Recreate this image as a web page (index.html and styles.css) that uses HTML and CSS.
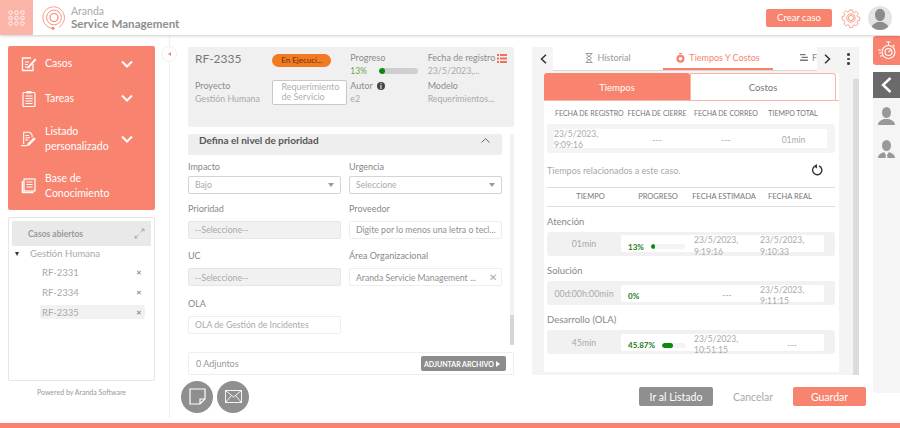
FILE: index.html
```html
<!DOCTYPE html>
<html lang="es">
<head>
    <meta charset="UTF-8">
    <meta name="viewport" content="width=device-width, initial-scale=1.0">
    <title>Aranda Service Management</title>
    <link rel="stylesheet" href="styles.css">
</head>
<body>
    <header class="topbar">
        <div class="appsButton">
            <svg width="17" height="16" viewBox="0 0 17 16" fill="none" stroke="#fff" stroke-width="0.8">
                <circle cx="2.5" cy="2.5" r="1.8"/><circle cx="8.5" cy="2.5" r="1.8"/><circle cx="14.5" cy="2.5" r="1.8"/>
                <circle cx="2.5" cy="8" r="1.8"/><circle cx="8.5" cy="8" r="1.8"/><circle cx="14.5" cy="8" r="1.8"/>
                <circle cx="2.5" cy="13.5" r="1.8"/><circle cx="8.5" cy="13.5" r="1.8"/><circle cx="14.5" cy="13.5" r="1.8"/>
            </svg>
        </div>
        <svg class="logoMark" width="24" height="24" viewBox="0 0 24 24" fill="none" stroke="#f8836e">
            <path d="M11 22.400A10.800 10.800 0 1 1 17 21" stroke-width="0.8"/>
            <circle cx="12" cy="11.500" r="7.400" stroke-width="0.9"/>
            <circle cx="12" cy="11.500" r="4" stroke-width="1.200"/>
            <circle cx="11" cy="22.300" r="1.500" fill="#f8836e" stroke="none"/>
        </svg>
        <div class="logoText">
            <span class="logoSmall">Aranda</span>
            <span class="logoBig">Service Management</span>
        </div>
        <button type="button" class="createButton">Crear caso</button>
        <svg class="gear" width="20" height="20" viewBox="0 0 20 20" fill="none" stroke="#f8836e" stroke-width="0.8">
            <path d="M8.4 1h3.2l.5 2.4 1.600.7 2.100-1.300 2.200 2.200-1.300 2.100.7 1.600 2.400.5v3.200l-2.400.5-.7 1.600 1.300 2.100-2.200 2.200-2.100-1.300-1.600.7-.5 2.400H8.400l-.5-2.400-1.600-.7-2.100 1.300-2.200-2.200 1.300-2.100-.7-1.600L0 11.600V8.400l2.400-.5.7-1.600-1.300-2.100L4 2l2.100 1.300 1.600-.7z" transform="translate(1 1) scale(.9)"/>
            <circle cx="10" cy="10" r="4.200"/><circle cx="10" cy="10" r="2.600"/>
        </svg>
        <div class="avatar">
            <svg width="24" height="24" viewBox="0 0 24 24" fill="#8b8b8b">
                <ellipse cx="12" cy="9" rx="5" ry="6.200"/>
                <path d="M3 24c0-5 4-7 6.500-8h5c2.500 1 6.500 3 6.500 8z"/>
            </svg>
        </div>
    </header>

    <div class="page">
        <aside class="sidebar">
            <span class="collapseDot"></span>
            <nav class="mainMenu">
                <a class="menuItem menuCasos">
                    <svg class="menuIcon" width="16" height="16" viewBox="0 0 16 16" fill="none" stroke="#fff" stroke-width="1.300">
                        <path d="M12 8v6.500H1.500V2H10"/><path d="M4 6h4M4 8.500h3M4 11h5" stroke-width="1.100"/><path d="M6.500 11 14 2.500l1.500 1.300L8 12l-2 .5z" fill="#fff" stroke="none"/>
                    </svg>
                    <span class="menuLabel">Casos</span>
                    <svg class="chevron" width="12" height="8" viewBox="0 0 12 8" fill="none" stroke="#fff" stroke-width="2"><path d="M1 1.500 6 6.500 11 1.500"/></svg>
                </a>
                <a class="menuItem menuTareas">
                    <svg class="menuIcon" width="16" height="17" viewBox="0 0 16 17" fill="none" stroke="#fff" stroke-width="1.200">
                        <rect x="2" y="2.500" width="12" height="14" rx="1"/><path d="M4.500 6h7M4.500 8.500h7M4.500 11h7M4.500 13.500h7"/><rect x="5.500" y="1" width="5" height="2.500" fill="#fff" stroke="none"/>
                    </svg>
                    <span class="menuLabel">Tareas</span>
                    <svg class="chevron" width="12" height="8" viewBox="0 0 12 8" fill="none" stroke="#fff" stroke-width="2"><path d="M1 1.500 6 6.500 11 1.500"/></svg>
                </a>
                <a class="menuItem menuListado">
                    <svg class="menuIcon" width="18" height="18" viewBox="0 0 18 18" fill="none" stroke="#fff" stroke-width="1.200">
                        <path d="M3 15V1.500h7l2.500 3V7"/><path d="M5 5h4M5 7.500h5M5 10h3"/><path d="M0 16.500h7"/><path d="M7 14.500 14.500 7l2 2-7.500 7.500H7z" fill="#fff" stroke="none"/>
                    </svg>
                    <span class="menuLabel">Listado<br>personalizado</span>
                    <svg class="chevron" width="12" height="8" viewBox="0 0 12 8" fill="none" stroke="#fff" stroke-width="2"><path d="M1 1.500 6 6.500 11 1.500"/></svg>
                </a>
                <a class="menuItem menuBase">
                    <svg class="menuIcon" width="15" height="16" viewBox="0 0 15 16" fill="none" stroke="#fff" stroke-width="1.200">
                        <rect x="2.500" y="1" width="11" height="12"/><path d="M5 4h6M5 6.500h6M5 9h6"/><path d="M1 3v11.500h11" stroke-width="1.600"/>
                    </svg>
                    <span class="menuLabel">Base de<br>Conocimiento</span>
                </a>
            </nav>
            <section class="openCases">
                <div class="openCasesTitle">
                    <span>Casos abiertos</span>
                    <svg width="11" height="11" viewBox="0 0 11 11" fill="none" stroke="#9a9a9a" stroke-width="0.8"><path d="M6.500 4.500 10 1M7.500 1H10v2.500M4.500 6.500 1 10M1 7.500V10h2.500"/></svg>
                </div>
                <div class="treeRoot"><span class="treeArrow"></span>Gestión Humana</div>
                <div class="treeItem"><span>RF-2331</span><span class="treeClose">✕</span></div>
                <div class="treeItem"><span>RF-2334</span><span class="treeClose">✕</span></div>
                <div class="treeItem treeItemActive"><span>RF-2335</span><span class="treeClose">✕</span></div>
            </section>
            <p class="poweredBy">Powered by Aranda Software</p>
        </aside>

        <main class="content">
            <div class="panels">
                <section class="casePanel">
                    <div class="summary">
                        <div class="summaryCol colId">
                            <h2 class="caseId">RF-2335</h2>
                            <div class="fieldTitle">Proyecto</div>
                            <div class="fieldValue">Gestión Humana</div>
                        </div>
                        <div class="summaryCol colState">
                            <span class="stateBadge">En Ejecuci...</span>
                            <div class="typeBox">Requerimiento<br>de Servicio</div>
                        </div>
                        <div class="summaryCol colProgress">
                            <div class="fieldTitle">Progreso</div>
                            <div class="progressLine"><span class="progressPct">13%</span><span class="bar"><span class="barFill" style="width: 15%"></span></span></div>
                            <div class="fieldTitle fieldGap">Autor <span class="infoDot">i</span></div>
                            <div class="fieldValue">e2</div>
                        </div>
                        <div class="summaryCol colDate">
                            <div class="fieldTitle">Fecha de registro</div>
                            <div class="fieldValue">23/5/2023,...</div>
                            <div class="fieldTitle fieldGap">Modelo</div>
                            <div class="fieldValue">Requerimientos...</div>
                        </div>
                        <svg class="listIcon" width="10" height="9" viewBox="0 0 10 9" fill="#f26d5b"><path d="M0 0h2v2H0zM3 0h7v2H3zM0 3.500h2v2H0zM3 3.500h7v2H3zM0 7h2v2H0zM3 7h7v2H3z"/></svg>
                    </div>

                    <div class="formArea">
                        <div class="formScroll">
                            <div class="sectionHead">
                                <span>Defina el nivel de prioridad</span>
                                <svg width="9" height="5" viewBox="0 0 9 5" fill="none" stroke="#555" stroke-width="0.9"><path d="M.5 4.500 4.500.7 8.500 4.500"/></svg>
                            </div>
                            <div class="formGrid">
                                <div class="field fieldShort">
                                    <label>Impacto</label>
                                    <div class="input inputSelect">Bajo<span class="selectArrow"></span></div>
                                </div>
                                <div class="field fieldShort">
                                    <label>Urgencia</label>
                                    <div class="input inputSelect">Seleccione<span class="selectArrow"></span></div>
                                </div>
                                <div class="field">
                                    <label>Prioridad</label>
                                    <div class="input inputOff">--Seleccione--</div>
                                </div>
                                <div class="field">
                                    <label>Proveedor</label>
                                    <div class="input inputThin inputDark">Digite por lo menos una letra o tecl...</div>
                                </div>
                                <div class="field">
                                    <label>UC</label>
                                    <div class="input inputOff">--Seleccione--</div>
                                </div>
                                <div class="field">
                                    <label>Área Organizacional</label>
                                    <div class="input inputThin inputDark">Aranda Servicie Management ...<span class="clearX">✕</span></div>
                                </div>
                                <div class="field">
                                    <label>OLA</label>
                                    <div class="input inputThin">OLA de Gestión de Incidentes</div>
                                </div>
                            </div>
                        </div>
                        <div class="scrollTrack"><span class="scrollThumb"></span></div>
                    </div>

                    <div class="attachBox">
                        <span>0 Adjuntos</span>
                        <span class="attachButton">ADJUNTAR ARCHIVO <span class="playIcon"></span></span>
                    </div>
                </section>

                <section class="detailPanel">
                    <div class="tabBar">
                        <svg class="tabArrow" width="7" height="10" viewBox="0 0 7 10" fill="none" stroke="#333" stroke-width="1.500"><path d="M6 .8 1.500 5 6 9.200"/></svg>
                        <div class="tabs">
                            <span class="tab tabHistory">
                                <svg width="8" height="10" viewBox="0 0 8 10" fill="none" stroke="#888" stroke-width="0.8"><path d="M.5.500h7M.5 9.500h7M1.500.5c0 3 5 3 5 4.500s-5 1.500-5 4.500M6.500.5c0 3-5 3-5 4.500s5 1.500 5 4.500"/></svg>
                                Historial
                            </span>
                            <span class="tab tabActive">
                                <svg width="9" height="10" viewBox="0 0 9 10" fill="#f8836e"><circle cx="4.500" cy="5.800" r="4"/><rect x="3" y="0" width="3" height="1.200"/><circle cx="4.500" cy="5.800" r="1.800" fill="#fff"/></svg>
                                Tiempos Y Costos
                            </span>
                            <span class="tab tabCut">
                                <svg width="10" height="9" viewBox="0 0 10 9" fill="#777"><path d="M0 0h7v1.500H0zM2 3.500h8V5H2zM0 7h10v2H0z"/></svg>
                                F
                            </span>
                        </div>
                        <svg class="tabArrow" width="7" height="10" viewBox="0 0 7 10" fill="none" stroke="#333" stroke-width="1.500"><path d="M1 .8 5.500 5 1 9.200"/></svg>
                        <span class="tabMenu"><i></i><i></i><i></i></span>
                    </div>

                    <div class="detailBody">
                        <div class="detailCard">
                            <div class="segmented">
                                <span class="segment segmentOn">Tiempos</span>
                                <span class="segment">Costos</span>
                            </div>

                            <div class="dateHead">
                                <span>FECHA DE REGISTRO</span>
                                <span>FECHA DE CIERRE</span>
                                <span>FECHA DE CORREO</span>
                                <span>TIEMPO TOTAL</span>
                            </div>
                            <div class="dateRow">
                                <div class="dateRowInner">
                                    <span class="cellDate">23/5/2023,<br>9:09:16</span>
                                    <span>---</span>
                                    <span>---</span>
                                    <span>01min</span>
                                </div>
                            </div>

                            <div class="relatedLine">
                                <span>Tiempos relacionados a este caso.</span>
                                <span class="refreshButton">
                                    <svg width="12" height="12" viewBox="0 0 12 12" fill="none" stroke="#333" stroke-width="1.400"><path d="M3.400 2.500A4.600 4.600 0 1 0 8 1.900"/><path d="M6 0v4.500L2.500 2.200z" fill="#333" stroke="none"/></svg>
                                </span>
                            </div>

                            <div class="timeHead">
                                <span>TIEMPO</span>
                                <span>PROGRESO</span>
                                <span>FECHA ESTIMADA</span>
                                <span>FECHA REAL</span>
                            </div>

                            <div class="timeLabel">Atención</div>
                            <div class="timeRow">
                                <span class="timeValue">01min</span>
                                <div class="timeInner">
                                    <span class="timeProgress"><b>13%</b><span class="miniBar miniBarShort"><span class="barFill" style="width: 13%"></span></span></span>
                                    <span class="timeDate">23/5/2023,<br>9:19:16</span>
                                    <span class="timeDate">23/5/2023,<br>9:10:33</span>
                                </div>
                            </div>

                            <div class="timeLabel">Solución</div>
                            <div class="timeRow">
                                <span class="timeValue">00d:00h:00min</span>
                                <div class="timeInner">
                                    <span class="timeProgress"><b>0%</b></span>
                                    <span class="timeDate timeDash">---</span>
                                    <span class="timeDate">23/5/2023,<br>9:11:15</span>
                                </div>
                            </div>

                            <div class="timeLabel">Desarrollo (OLA)</div>
                            <div class="timeRow">
                                <span class="timeValue">45min</span>
                                <div class="timeInner">
                                    <span class="timeProgress"><b>45.87%</b><span class="miniBar"><span class="barFill" style="width: 46%"></span></span></span>
                                    <span class="timeDate">23/5/2023,<br>10:51:15</span>
                                    <span class="timeDate timeDash">---</span>
                                </div>
                            </div>
                        </div>
                        <div class="detailScroll"></div>
                    </div>
                </section>
            </div>

            <div class="bottomBar">
                <span class="roundButton">
                    <svg width="17" height="17" viewBox="0 0 17 17" fill="none" stroke="#fff" stroke-width="1.200"><path d="M1 1h15v10l-5 5H1zM16 11h-5v5"/></svg>
                </span>
                <span class="roundButton">
                    <svg width="17" height="13" viewBox="0 0 17 13" fill="none" stroke="#fff" stroke-width="0.900"><rect x="0.500" y="0.500" width="16" height="12"/><path d="M.5.500 8.500 7 16.500.5M.5 12.500 6.500 5.500M16.500 12.500 10.500 5.500"/></svg>
                </span>
                <button type="button" class="actionButton actionGray">Ir al Listado</button>
                <button type="button" class="actionButton actionPlain">Cancelar</button>
                <button type="button" class="actionButton actionMain">Guardar</button>
            </div>
        </main>

        <aside class="rail">
            <span class="railTimer">
                <svg width="18" height="19" viewBox="0 0 18 19" fill="none" stroke="#fff" stroke-width="1.100">
                    <circle cx="10.500" cy="11" r="6.500"/><circle cx="10.500" cy="11" r="3.500"/><path d="M8.500 1h4M10.500 1v3M15 4l1.500 1.500M10.500 11l2-2M0 9h3M1 12h2.500M2 15h2.500"/>
                </svg>
            </span>
            <div class="railBody">
                <span class="railBack">
                    <svg width="11" height="16" viewBox="0 0 11 16" fill="none" stroke="#fff" stroke-width="2.400"><path d="M9.500 1 2 8l7.500 7"/></svg>
                </span>
                <svg class="railUser" width="19" height="18" viewBox="0 0 19 18" fill="#999"><ellipse cx="9.500" cy="5.500" rx="4.500" ry="5.500"/><path d="M1 18c0-4 4-5 6-6h5c2 1 6 2 6 6z"/></svg>
                <svg class="railUser" width="19" height="18" viewBox="0 0 19 18" fill="#999"><ellipse cx="9.500" cy="5.500" rx="4.500" ry="5.500"/><path d="M1 18c0-4 4-5 6-6l2 3-.5 3zM18 18c0-4-4-5-6-6l-2 3 .5 3z"/></svg>
            </div>
        </aside>
    </div>

    <div class="bottomStrip"></div>
</body>
</html>
```

FILE: styles.css
```css
* {
    box-sizing: border-box;
}

body {
    font-family: "Lato", "Liberation Sans", sans-serif;
    font-size: 9.5px;
    color: #a8a8a8;
    background-color: #fff;
    margin: 0;
    height: 428px;
    overflow: hidden;
    display: flex;
    flex-direction: column;
}

/* top bar */
.topbar {
    height: 35px;
    flex-shrink: 0;
    display: flex;
    align-items: center;
    box-shadow: 0 1px 3px rgba(0, 0, 0, 0.2);
    position: relative;
    z-index: 2;
    background: #fff;
}

.appsButton {
    width: 33px;
    height: 35px;
    background: #fab5a8;
    display: flex;
    align-items: center;
    justify-content: center;
}

.logoMark {
    margin-left: 9px;
}

.logoText {
    margin-left: 5px;
    display: flex;
    flex-direction: column;
    color: #8e8e8e;
    flex-grow: 1;
}

.logoSmall {
    font-size: 10.5px;
    line-height: 11px;
    color: #aaa;
}

.logoBig {
    font-size: 11.6px;
    line-height: 13px;
    font-weight: 700;
}

.createButton {
    width: 66px;
    height: 18px;
    border: none;
    border-radius: 2px;
    background: #f8836e;
    color: #fff;
    font-family: inherit;
    font-size: 9.5px;
    padding: 0;
}

.gear {
    margin-left: 9px;
}

.avatar {
    width: 24px;
    height: 24px;
    border-radius: 50%;
    background: #e4e4e4;
    overflow: hidden;
    margin-left: 7px;
    margin-right: 8px;
}

/* page columns */
.page {
    height: 388px;
    display: flex;
}

.sidebar {
    width: 170px;
    flex-shrink: 0;
    padding: 11px 14px 0 8px;
    border-right: 1px solid #f0f0f0;
    margin-bottom: 5px;
    position: relative;
}

.collapseDot {
    position: absolute;
    top: 11px;
    right: -8px;
    width: 16px;
    height: 16px;
    border-radius: 50%;
    background: #fff;
    border: 1px solid #f0f0f0;
}

.collapseDot::after {
    content: "";
    display: block;
    margin: 5px 0 0 6px;
    width: 0;
    height: 0;
    border-top: 2px solid transparent;
    border-bottom: 2px solid transparent;
    border-right: 3px solid #f8836e;
}

.mainMenu {
    height: 164px;
    background: #f8836e;
    border-radius: 2px;
    color: #fff;
    font-size: 10.5px;
    line-height: 15px;
    display: flex;
    flex-direction: column;
}

.menuItem {
    display: flex;
    align-items: center;
    padding: 0 22px 0 13px;
}

.menuCasos { height: 34px; padding-top: 1px; }
.menuTareas { height: 35px; padding-top: 1px; }
.menuListado { height: 46px; padding-top: 1px; }
.menuBase { height: 49px; }

.menuIcon {
    width: 16px;
    flex-shrink: 0;
}

.menuLabel {
    margin-left: 8px;
    flex-grow: 1;
}

.openCases {
    height: 164px;
    margin-top: 7px;
    padding: 3px;
    border: 1px solid #e6e6e6;
    border-radius: 2px;
}

.openCasesTitle {
    height: 25px;
    background: #e9e9e9;
    display: flex;
    align-items: center;
    justify-content: space-between;
    padding: 0 6px 0 16px;
    font-size: 8.5px;
    font-weight: 700;
    color: #999;
}

.treeRoot {
    display: flex;
    align-items: center;
    height: 15px;
    margin-bottom: 4px;
    padding-left: 3px;
    font-size: 9.5px;
}

.treeArrow {
    width: 0;
    height: 0;
    border-left: 2.500px solid transparent;
    border-right: 2.500px solid transparent;
    border-top: 4px solid #333;
    margin-right: 11px;
}

.treeItem {
    height: 14px;
    margin: 0 6px 6px 28px;
    padding: 0 3px 0 2px;
    display: flex;
    align-items: center;
    justify-content: space-between;
    border-radius: 2px;
    font-size: 9.5px;
}

.treeItemActive {
    background: #f1f1f1;
}

.treeClose {
    font-size: 7px;
    color: #777;
}

.poweredBy {
    margin: 7px 0 0;
    text-align: center;
    font-size: 7px;
    color: #999;
}

/* center and right columns */
.content {
    flex-grow: 1;
    display: flex;
    flex-direction: column;
    padding-left: 11px;
}

.panels {
    display: flex;
    gap: 18px;
    height: 340px;
    padding: 12px 0 0 7px;
}

.casePanel {
    width: 326px;
    display: flex;
    flex-direction: column;
}

.summary {
    height: 80px;
    background: #f0f0f0;
    border-radius: 2px;
    padding: 4px 7px 0;
    display: flex;
    position: relative;
}

.summaryCol {
    display: flex;
    flex-direction: column;
}

.colId { width: 78px; padding-top: 1px; }
.colState { width: 78.500px; padding-top: 3px; }
.colProgress { width: 78px; }
.colDate { width: 80px; }

.caseId {
    margin: 0 0 13px;
    font-size: 12px;
    line-height: 14px;
    font-weight: 400;
    color: #777;
}

.fieldTitle {
    font-size: 9px;
    line-height: 13px;
    color: #8c8c8c;
}

.fieldValue {
    font-size: 8.800px;
    line-height: 13px;
    color: #aaa;
}

.fieldGap {
    margin-top: 2px;
}

.stateBadge {
    width: 59px;
    height: 13px;
    border-radius: 7px;
    background: #f27a23;
    color: #6b2f05;
    font-size: 8px;
    line-height: 13px;
    text-align: center;
}

.typeBox {
    width: 75px;
    height: 25px;
    margin-top: 13px;
    padding: 1px 0 0 8px;
    background: #fff;
    border: 1px solid #c8c8c8;
    border-radius: 2px;
    font-size: 9px;
    line-height: 10px;
    color: #b0b0b0;
}

.progressLine {
    display: flex;
    align-items: center;
    height: 13px;
    gap: 15px;
}

.progressPct {
    font-size: 8.5px;
    color: #6aa84f;
    width: 14px;
}

.bar {
    width: 39px;
    height: 6px;
    background: #cfcfcf;
    border-radius: 3px;
    overflow: hidden;
}

.barFill {
    display: block;
    height: 100%;
    background: #0b8a0b;
    border-radius: 3px;
}

.infoDot {
    display: inline-block;
    width: 8px;
    height: 8px;
    border-radius: 50%;
    background: #444;
    color: #fff;
    font-size: 7px;
    line-height: 8px;
    text-align: center;
    margin-left: 2px;
    font-weight: 700;
}

.listIcon {
    position: absolute;
    top: 7px;
    right: 7px;
}

.formArea {
    height: 212px;
    margin-top: 7px;
    display: flex;
    justify-content: space-between;
    overflow: hidden;
}

.formScroll {
    width: 314px;
}

.sectionHead {
    height: 21px;
    background: #eee;
    border-radius: 2px;
    display: flex;
    justify-content: space-between;
    align-items: center;
    padding: 0 12px 8px 11px;
    font-size: 10px;
    font-weight: 700;
    color: #555;
}

.formGrid {
    display: grid;
    grid-template-columns: 153px 153px;
    column-gap: 8px;
    margin-top: 6px;
}

.field label {
    display: block;
    height: 11px;
    font-size: 9px;
    line-height: 11px;
    color: #888;
}

.field {
    height: 47.500px;
}

.fieldShort {
    height: 42px;
}

.input {
    height: 18px;
    margin-top: 7px;
    display: flex;
    align-items: center;
    padding: 0 6px;
    background: #fff;
    border: 1px solid #ddd;
    border-radius: 2px;
    font-size: 8.700px;
    color: #aaa;
    white-space: nowrap;
    overflow: hidden;
}

.inputSelect {
    justify-content: space-between;
    height: 18px;
    margin-top: 4px;
    border-color: #d4d4d4;
}

.inputOff {
    background: #f1f1f1;
    border-color: #e6e6e6;
}

.inputThin {
    border-color: #eee;
}

.inputDark {
    color: #8f8f8f;
    justify-content: space-between;
    padding-right: 4px;
}

.selectArrow {
    width: 0;
    height: 0;
    border-left: 3px solid transparent;
    border-right: 3px solid transparent;
    border-top: 4px solid #999;
}

.clearX {
    color: #aaa;
    font-size: 10px;
}

.scrollTrack {
    width: 4px;
    background: #f2f2f2;
    display: flex;
    flex-direction: column;
    justify-content: flex-end;
}

.scrollThumb {
    height: 30px;
    background: #d6d6d6;
}

.attachBox {
    height: 23px;
    margin-top: 7px;
    border: 1px solid #eee;
    border-radius: 2px;
    display: flex;
    justify-content: space-between;
    align-items: center;
    padding: 0 7px;
    font-size: 9px;
    color: #999;
}

.attachButton {
    width: 85px;
    height: 15px;
    background: #8c8c8c;
    border-radius: 2px;
    color: #fff;
    font-size: 7px;
    font-weight: 700;
    display: flex;
    align-items: center;
    justify-content: space-between;
    padding: 0 6px 0 3px;
    white-space: nowrap;
}

.playIcon {
    width: 0;
    height: 0;
    border-top: 3px solid transparent;
    border-bottom: 3px solid transparent;
    border-left: 4px solid #fff;
}

.detailPanel {
    width: 327px;
    height: 328px;
    background: #f4f4f4;
    display: flex;
    flex-direction: column;
}

.tabBar {
    height: 24px;
    flex-shrink: 0;
    display: flex;
    align-items: center;
    padding: 0 7px 0 8px;
    font-size: 9px;
}

.tabs {
    width: 264px;
    flex-shrink: 0;
    height: 24px;
    margin: 0 7px 0 6px;
    background: #fff;
    border-bottom: 1px solid #d8d8d8;
    display: flex;
    overflow: hidden;
}

.tab {
    display: flex;
    align-items: center;
    justify-content: center;
    gap: 4px;
    color: #999;
    white-space: nowrap;
    padding-bottom: 2px;
}

.tabHistory { width: 110px; }

.tabActive {
    width: 110px;
    color: #f8836e;
    border-bottom: 2px solid #f8836e;
    padding-bottom: 0;
}

.tabCut {
    width: 44px;
    color: #888;
    justify-content: flex-start;
    padding-left: 27px;
}

.tabMenu {
    display: flex;
    flex-direction: column;
    gap: 2px;
    margin-left: 16px;
}

.tabMenu i {
    display: block;
    width: 2.500px;
    height: 2.500px;
    border-radius: 50%;
    background: #444;
}

.detailBody {
    flex-grow: 1;
    display: flex;
    justify-content: space-between;
    padding: 2px 0 0 12px;
    min-height: 0;
}

.detailCard {
    width: 295px;
    height: 299px;
    background: #fff;
    border-radius: 2px;
}

.detailScroll {
    width: 6px;
    background: #dcdcdc;
    margin-top: 6px;
}

.segmented {
    height: 28px;
    display: flex;
    border-bottom: 1px solid #fab5a8;
}

.segment {
    width: 146px;
    display: flex;
    align-items: center;
    justify-content: center;
    font-size: 9.5px;
    color: #777;
    border: 1px solid #fab5a8;
    border-bottom: none;
    border-radius: 0 3px 0 0;
}

.segmentOn {
    width: 146px;
    background: #f8836e;
    color: #fff;
    border-color: #f8836e;
    border-radius: 3px 3px 0 0;
}

.dateHead {
    margin-top: 7px;
    padding-left: 11px;
    height: 10px;
    display: grid;
    grid-template-columns: 67px 70px 68px 66px;
    font-size: 7px;
    line-height: 10px;
    color: #777;
    white-space: nowrap;
    text-align: center;
}

.dateRow {
    height: 29px;
    margin: 6px 4px 0 3px;
    background: #f4f4f4;
    border-radius: 3px;
    padding: 5px 8px 0 7px;
}

.dateRowInner {
    height: 19px;
    background: #fff;
    display: grid;
    grid-template-columns: 68px 70px 68px 67px;
    align-items: center;
    text-align: center;
    font-size: 8.500px;
    line-height: 11px;
    color: #aaa;
}

.cellDate {
    text-align: left;
}

.relatedLine {
    height: 22px;
    margin-top: 6px;
    padding: 0 12px 0 3px;
    display: flex;
    align-items: center;
    justify-content: space-between;
    font-size: 9px;
}

.refreshButton {
    width: 20px;
    height: 20px;
    display: flex;
    align-items: center;
    justify-content: center;
}

.timeHead {
    height: 19.500px;
    margin: 6px 4px 0 3px;
    border-top: 1px solid #ddd;
    border-bottom: 1px solid #ddd;
    display: grid;
    grid-template-columns: 77px 58px 74px 58px;
    padding-left: 5px;
    align-items: center;
    text-align: center;
    font-size: 7.500px;
    color: #777;
    white-space: nowrap;
}

.timeLabel {
    height: 13px;
    margin: 8.250px 0 4px 3px;
    font-size: 9.5px;
    line-height: 13px;
    color: #888;
}

.timeRow {
    height: 24px;
    margin: 0 4px 0 3px;
    padding-right: 11px;
    background: #f1f1f1;
    border-radius: 3px;
    display: flex;
    align-items: center;
    white-space: nowrap;
}

.timeValue {
    width: 74px;
    flex-shrink: 0;
    text-align: center;
    font-size: 8.800px;
    color: #aaa;
}

.timeInner {
    flex-grow: 1;
    height: 17px;
    background: #fff;
    border-radius: 2px;
    display: grid;
    grid-template-columns: 73px 66px 64px;
    align-items: center;
}

.timeProgress {
    display: flex;
    align-items: center;
    gap: 7px;
    padding-left: 7px;
    font-size: 8px;
    color: #1c7c1c;
}

.timeProgress b {
    font-weight: 700;
}

.miniBar {
    width: 24px;
    height: 5px;
    background: #f4f4f4;
    border-radius: 3px;
    overflow: hidden;
    flex-shrink: 0;
}

.miniBarShort {
    width: 34px;
}

.timeDate {
    font-size: 8.500px;
    line-height: 11.500px;
    color: #aaa;
}

.timeDash {
    text-align: center;
}

/* bottom row */
.bottomBar {
    display: flex;
    align-items: center;
    height: 48px;
    padding-bottom: 5px;
}

.roundButton {
    width: 32px;
    height: 32px;
    border-radius: 50%;
    background: #8f8f8f;
    display: flex;
    align-items: center;
    justify-content: center;
    margin-right: 4px;
}

.actionButton {
    width: 74px;
    height: 19px;
    border: none;
    border-radius: 2px;
    font-family: inherit;
    font-size: 10.500px;
    padding: 0;
    margin-right: 3px;
}

.actionGray {
    margin-left: 386px;
    background: #8f8f8f;
    color: #fff;
}

.actionPlain {
    background: #fff;
    color: #aaa;
}

.actionMain {
    width: 73px;
    background: #f8836e;
    color: #fff;
}

.rail {
    width: 27px;
    flex-shrink: 0;
    display: flex;
    flex-direction: column;
}

.railTimer {
    height: 29px;
    margin-top: 1px;
    background: #f8836e;
    border-radius: 3px 0 0 3px;
    display: flex;
    align-items: center;
    justify-content: center;
}

.railBody {
    margin-top: 7px;
    height: 321px;
    background: #f5f5f5;
    border-radius: 0 0 0 4px;
    display: flex;
    flex-direction: column;
    align-items: center;
}

.railBack {
    width: 100%;
    height: 26px;
    background: #6a6a6a;
    display: flex;
    align-items: center;
    justify-content: center;
}

.railUser {
    margin-top: 9px;
    margin-bottom: 6px;
}

.bottomStrip {
    height: 5px;
    background: #f8836e;
    flex-shrink: 0;
}
```
